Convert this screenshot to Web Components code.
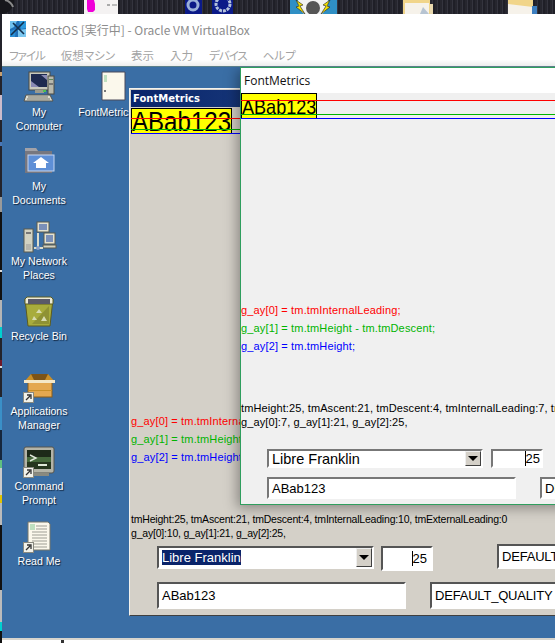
<!DOCTYPE html>
<html lang="ja">
<head>
<meta charset="utf-8">
<title>FontMetrics</title>
<style>
  html, body { margin: 0; height: 100%; overflow: hidden; }
  body {
    background: linear-gradient(#23232b 0 72px, #c9a070 72px 76px, #23232b 76px 95px, #cdbccb 95px 120px,
      #23232b 120px 142px, #4a78b8 142px 146px, #23232b 146px 197px, #9a9a9a 197px 212px, #111 212px 270px,
      #ddd 270px 272px, #111 272px 300px, #b5b5b5 300px 327px, #00d0d0 327px 338px, #23232b 338px 360px,
      #701828 360px 366px, #ddd 366px 368px, #23232b 368px 397px, #3a90c8 397px 430px, #16263c 430px 460px,
      #60c080 460px 468px, #ccc 468px 495px, #e4c400 495px 503px, #bbb 503px 525px, #111 525px 590px,
      #bbb 590px 622px, #00d0d0 622px 631px, #111 631px);
  }
</style>
</head>
<body>
<host-strip></host-strip>
<vbox-frame>
  <desk-icon style="left:1px;top:72px" icon="computer" label="My|Computer"></desk-icon>
  <desk-icon style="left:1px;top:146px" icon="docs" label="My|Documents"></desk-icon>
  <desk-icon style="left:1px;top:221px" icon="net" label="My Network|Places"></desk-icon>
  <desk-icon style="left:1px;top:296px" icon="bin" label="Recycle Bin"></desk-icon>
  <desk-icon style="left:1px;top:371px" icon="box" label="Applications|Manager" shortcut></desk-icon>
  <desk-icon style="left:1px;top:446px" icon="cmd" label="Command|Prompt" shortcut></desk-icon>
  <desk-icon style="left:1px;top:521px" icon="readme" label="Read Me" shortcut></desk-icon>
  <desk-icon style="left:68px;top:72px" icon="blank" label="FontMetrics"></desk-icon>
  <classic-window style="left:129px;top:88px;width:500px;height:528px" caption="FontMetrics">
    <metrics-app leading="10" ay0="10" combo-selected></metrics-app>
  </classic-window>
  <modern-window style="left:240px;top:67px;width:460px;height:438px" caption="FontMetrics">
    <metrics-app compact leading="7" ay0="7"></metrics-app>
  </modern-window>
</vbox-frame>

<script>
// 上端のホストデスクトップ（サムネイル）
class HostStrip extends HTMLElement {
  constructor() {
    super();
    this.attachShadow({ mode: 'open' }).innerHTML = `
      <style>
        :host { display: block; height: 14px; position: relative; overflow: hidden;
                background: repeating-linear-gradient(90deg, #26262e 0 2px, #34343e 2px 3px, #1f1f27 3px 5px); }
        svg { position: absolute; top: 0; display: block; }
      </style>
      <svg style="left:0" width="20" height="14" viewBox="0 0 20 14"><circle cx="1" cy="1" r="13" fill="#17171b"/><path d="M5 0A11 11 0 0 1 13 7" stroke="#8a8a8a" stroke-width="2" fill="none"/></svg>
      <svg style="left:84px" width="35" height="14" viewBox="0 0 35 14"><rect x="0" width="34" height="14" fill="#f4f2f2"/><path d="M3 0h7l1 4v6l-2 2H4l-1-3z" fill="#f000d8"/><rect x="23" y="4" width="3" height="2" fill="#aaa"/><rect x="28" y="4" width="5" height="2" fill="#bbb"/></svg>
      <svg style="left:185px" width="50" height="14" viewBox="0 0 50 14"><rect width="17" height="14" fill="#0b1a88"/><rect x="27" width="21" height="14" fill="#0b1a88"/><circle cx="8" cy="5" r="5" fill="none" stroke="#9ab0d8" stroke-width="3"/><circle cx="38" cy="4" r="7" fill="none" stroke="#b4c2dc" stroke-width="3" stroke-dasharray="3 1"/></svg>
      <svg style="left:290px" width="47" height="14" viewBox="0 0 47 14"><rect width="47" height="14" fill="#2f8fc4"/><circle cx="23" cy="2" r="15" fill="#f2f2f2"/><circle cx="23" cy="8" r="7" fill="#555"/><path d="M6 0l7 5-3 1 5 8-9-7 3-1zM40 0l-7 5 3 1-5 8 9-7-3-1z" fill="#f4e000" stroke="#222" stroke-width=".6"/></svg>
      <svg style="left:403px" width="31" height="14" viewBox="0 0 31 14"><rect width="27" height="14" fill="#f1d58a"/><rect x="2" y="3" width="24" height="11" fill="#f6f2ea"/><path d="M20 7l6 7h-9z" fill="#b7c4d2"/><rect x="27" y="4" width="3" height="10" fill="#e8d8ae"/></svg>
      <svg style="left:508px" width="31" height="14" viewBox="0 0 31 14"><rect width="25" height="14" fill="#f1d58a"/><path d="M0 4l25 3v7H0z" fill="#f6f2ea"/><rect x="24" y="6" width="5" height="8" fill="#3d7fc0"/></svg>
    `;
  }
}
customElements.define('host-strip', HostStrip);

// VirtualBox のウィンドウ枠
class VboxFrame extends HTMLElement {
  constructor() {
    super();
    this.attachShadow({ mode: 'open' }).innerHTML = `
      <style>
        :host { display: block; position: absolute; left: 2px; right: 0; top: 14px; bottom: 0;
                background: #fff; font-family: "Noto Sans CJK JP", "Liberation Sans", sans-serif; }
        .title { height: 30px; display: flex; align-items: center; gap: 5px; padding-left: 8px;
                 font-size: 12px; color: #8d8d8d; letter-spacing: -.02px; }
        .menu { height: 22px; display: flex; align-items: center; gap: 16px; padding-left: 7px;
                font-size: 11.5px; color: #a3a3a3; font-feature-settings: "palt";
                background: linear-gradient(#fff 0 70%, #ececec); }
        .menu .tight { letter-spacing: -1px; }
        .desk { position: absolute; left: 0; right: 0; top: 52px; height: 572px;
                background: #3a6ea5; border-top: 1px solid #5a7f8a; box-sizing: border-box; overflow: hidden; }
        .canvas { position: absolute; left: -2px; top: -67px; width: 800px; height: 800px; }
        .bottom { position: absolute; left: 0; right: 0; top: 624px; height: 5px;
                  background: linear-gradient(#d8d5cd 0 2px, #fff 2px); }
        .bottom i { position: absolute; left: 59px; top: 2px; width: 3px; height: 3px; background: #333; }
        svg { display: block; }
      </style>
      <div class="title">
        <svg width="16" height="16" viewBox="0 0 16 16">
          <rect width="16" height="16" fill="#1f6fb8"/>
          <path d="M0 0h7L4 6 0 8z" fill="#6fc0ee"/><path d="M9 0h7v7l-5 1z" fill="#2d9ade"/>
          <path d="M0 10l6-2-1 8H0z" fill="#2a8fd6"/><path d="M8 9l8-1v8H8z" fill="#7bc7f0"/>
          <path d="M1 14L14 1M3 2l11 11" stroke="#12304f" stroke-width="1.6"/>
        </svg>
        <span>ReactOS [実行中] - Oracle VM VirtualBox</span>
      </div>
      <div class="menu">
        <span class="tight">ファイル</span><span>仮想マシン</span><span>表示</span><span>入力</span><span class="tight">デバイス</span><span>ヘルプ</span>
      </div>
      <div class="desk"><div class="canvas"><slot></slot></div></div>
      <div class="bottom"><i></i></div>
    `;
  }
}
customElements.define('vbox-frame', VboxFrame);

const ICONS = {
  computer: `<rect x="6" y="0" width="21" height="18" fill="#c9c9bd" stroke="#4a4a44"/><rect x="8" y="2" width="16" height="13" fill="#1f2a50"/><path d="M8 9l8 6H8zM18 3l6 5v-5z" fill="#8a8ab4"/><rect x="25" y="4" width="6" height="18" fill="#b9b9ad" stroke="#4a4a44"/><rect x="26" y="7" width="4" height="1" fill="#5d8a5d"/><rect x="26" y="11" width="4" height="2" fill="#777"/><rect x="12" y="18" width="9" height="3" fill="#9a9a8e"/><rect x="20" y="18" width="3" height="2" fill="#50c050"/><path d="M3 23h24l3 6H1z" fill="#dcdcd0" stroke="#55554e"/><path d="M5 25h20M4 27h23" stroke="#77776e"/>`,
  docs: `<path d="M2 2h11l2 3h14v22H2z" fill="#77777f"/><path d="M2 2h11l2 3H2z" fill="#a2a2a8"/><rect x="5" y="9" width="26" height="16" fill="#5e8fd6" stroke="#c6d6f2"/><path d="M18 11l8 6h-3v5H13v-5h-3z" fill="#fff"/>`,
  net: `<rect x="1" y="8" width="9" height="23" fill="#d2d2c2" stroke="#5a5a4e"/><rect x="3" y="11" width="5" height="2" fill="#777"/><path d="M3 24h5M3 26h5M3 28h5" stroke="#999"/><rect x="14" y="1" width="12" height="10" fill="#e4e2d0" stroke="#5a5a4e"/><rect x="16" y="3" width="8" height="6" fill="#7b90b8"/><rect x="21" y="12" width="11" height="11" fill="#e4e2d0" stroke="#5a5a4e"/><rect x="23" y="14" width="7" height="7" fill="#7b90b8"/><rect x="20" y="24" width="13" height="3" fill="#d2d2c2" stroke="#5a5a4e"/><path d="M11 27h9M15 12v15" stroke="#dddccc" stroke-width="2"/><circle cx="15" cy="27" r="2" fill="#8aa0c8"/>`,
  bin: `<path d="M2 3h28l-3 27H5z" fill="#a8ac3c" stroke="#5c5c20"/><path d="M2 3l2-2h24l2 2v5H2z" fill="#ecebd8" stroke="#5c5c20"/><rect x="5" y="3" width="22" height="5" fill="#5a5a68"/><path d="M9 28L26 10v18z" fill="#8f9234"/><path d="M16 13l3 4h-6zM11 20l3 4h-5zM21 20l3 5h-6z" fill="#d8dbb0"/>`,
  box: `<path d="M1 11L8 3h17l7 8-3 1H4z" fill="#c98f28"/><path d="M8 3h17l-3 6H11z" fill="#7c5418"/><rect x="5" y="11" width="24" height="15" fill="#e4a850" stroke="#8a5c18"/><rect x="1" y="9" width="31" height="3" fill="#f4e8c8"/><rect x="5" y="19" width="24" height="1" fill="#c98f28"/>`,
  cmd: `<rect x="1" y="1" width="30" height="26" rx="2" fill="#b4b4a8" stroke="#55554e"/><rect x="4" y="4" width="24" height="19" fill="#1d2a18"/><rect x="4" y="11" width="24" height="5" fill="#45683a"/><rect x="4" y="16" width="24" height="7" fill="#26361e"/><path d="M7 9l6 3-6 3" stroke="#dfe8d8" stroke-width="1.4" fill="none"/><rect x="15" y="18" width="9" height="2" fill="#dfe8d8"/><rect x="8" y="27" width="18" height="3" fill="#8a8a80"/>`,
  readme: `<path d="M5 1h20l2 2v26H5z" fill="#fbf8ec" stroke="#77776a"/><rect x="7" y="3" width="5" height="6" fill="#bfe0bf"/><path d="M13 5h11M13 8h11M9 11h15M9 14h15M9 17h15M9 20h15M9 23h15M9 26h15" stroke="#9d9d94"/>`,
  blank: `<path d="M12 0h23v28H12z" fill="#fbf8ec" stroke="#4a4a5a"/><rect x="14" y="3" width="3" height="7" fill="#bfe0bf"/><rect x="14" y="18" width="2" height="2" fill="#777"/>`
};

// デスクトップのアイコン
class DeskIcon extends HTMLElement {
  constructor() {
    super();
    this.attachShadow({ mode: 'open' });
  }

  connectedCallback() {
    const lines = this.getAttribute('label').split('|').map(t => `<div>${t}</div>`).join('');
    const arrow = this.hasAttribute('shortcut') ? `
      <svg class="arrow" width="11" height="11" viewBox="0 0 11 11">
        <rect x=".5" y=".5" width="10" height="10" fill="#f2f2ea" stroke="#8a8a80"/>
        <path d="M3 8l4-4M4 3h4v4" stroke="#333" stroke-width="1.3" fill="none"/>
      </svg>` : '';
    this.shadowRoot.innerHTML = `
      <style>
        :host { position: absolute; display: flex; flex-direction: column; align-items: center;
                width: 76px; font: 10.6px/14px "Liberation Sans", sans-serif; color: #fff; }
        .pic { position: relative; width: 32px; height: 32px; margin-bottom: 1px; }
        .arrow { position: absolute; left: 0; bottom: 0; }
        .text { text-align: center; white-space: nowrap; text-shadow: 1px 1px 1px #10233c; }
        svg { display: block; overflow: visible; }
      </style>
      <div class="pic"><svg width="32" height="32" viewBox="0 0 32 32">${ICONS[this.getAttribute('icon')]}</svg>${arrow}</div>
      <div class="text">${lines}</div>
    `;
  }
}
customElements.define('desk-icon', DeskIcon);

// ReactOS 側のクラシックウィンドウ
class ClassicWindow extends HTMLElement {
  constructor() {
    super();
    this.attachShadow({ mode: 'open' });
  }

  connectedCallback() {
    this.shadowRoot.innerHTML = `
      <style>
        :host { position: absolute; display: flex; flex-direction: column; box-sizing: border-box;
                padding: 1px 2px 2px 1px; background: #d4d0c8;
                border: 1px solid; border-color: #f4f2ec #404040 #404040 #f4f2ec; }
        .bar { height: 17px; flex: none; display: flex; align-items: center; padding-left: 2px; margin-bottom: 1px;
               font: bold 10px "DejaVu Sans", sans-serif; color: #fff;
               background: linear-gradient(90deg, #0a246a, #3a6ea5); }
      </style>
      <div class="bar">${this.getAttribute('caption')}</div>
      <slot></slot>
    `;
  }
}
customElements.define('classic-window', ClassicWindow);

// 手前の Windows 10 ウィンドウ
class ModernWindow extends HTMLElement {
  constructor() {
    super();
    this.attachShadow({ mode: 'open' });
  }

  connectedCallback() {
    this.shadowRoot.innerHTML = `
      <style>
        :host { position: absolute; display: flex; flex-direction: column; box-sizing: border-box;
                border: 1px solid #2f9e5e; background: #f0f0f0;
                box-shadow: -3px 3px 12px rgba(0,0,0,.35); }
        .bar { height: 25px; flex: none; display: flex; align-items: center; padding-left: 3px;
               background: #fff; color: #111; font: 12px "Open Sans", "Liberation Sans", sans-serif; }
      </style>
      <div class="bar">${this.getAttribute('caption')}</div>
      <slot></slot>
    `;
  }
}
customElements.define('modern-window', ModernWindow);

// FontMetrics アプリ本体
class MetricsApp extends HTMLElement {
  constructor() {
    super();
    this.attachShadow({ mode: 'open' });
  }

  connectedCallback() {
    const leading = this.getAttribute('leading');
    const ay0 = this.getAttribute('ay0');
    const selected = this.hasAttribute('combo-selected');
    this.shadowRoot.innerHTML = `
      <style>
        :host { display: block; position: relative; flex: 1;
                font: 11px "Liberation Sans", sans-serif; color: #000;
                --gap-code: 278px; --gap-ctl: 6px; --row1: 23px; --row2: 27px; --gap-rows: 13px;
                --sample: 28px; --sample-lh: 25px; --sample-w: 99px; --red: 10px; --green: 21px; --blue: 25px;
                --combo-font: 13px; --combo-w: 217px; --row-gap: 7px;
                --status-font: 10.5px; --status-sp: -.2px;
                --spin-pad: 4px; --spin-h: 25px; --shade: #555; }
        :host([compact]) { --gap-code: 182px; --gap-ctl: 20px; --row1: 19px; --row2: 22px; --gap-rows: 9px;
                --sample: 21px; --sample-lh: 26px; --sample-w: 74px; --red: 7px; --green: 21px; --blue: 25px;
                --combo-font: 14.5px; --combo-w: 216px; --row-gap: 8px;
                --status-font: 11px; --status-sp: .1px;
                --spin-pad: 1px; --spin-h: 19px; --shade: #777; }
        .sample { box-sizing: border-box; width: calc(var(--sample-w) + 2px); height: 26px; border: 1px solid #000;
                  background: #ff0; overflow: hidden; white-space: nowrap; }
        .sample span { display: inline-block; font-size: var(--sample); line-height: var(--sample-lh);
                       transform: scaleX(.86); transform-origin: 0 0; }
        .line { position: absolute; left: 0; right: 0; height: 1px; }
        .code { margin-top: var(--gap-code); line-height: 18px; letter-spacing: .15px; }
        .r { color: #f00; } .g { color: #00b400; } .b { color: #00f; }
        .status { margin-top: 47px; line-height: 13.5px; white-space: nowrap;
                  font-size: var(--status-font); letter-spacing: var(--status-sp); }
        .row { display: flex; padding-left: 26px; }
        .row1 { margin-top: var(--gap-ctl); height: var(--row1); gap: var(--row-gap); }
        .row2 { margin-top: var(--gap-rows); height: var(--row2); gap: 24px; }
        .sunken { box-sizing: border-box; background: #fff; display: flex; align-items: center;
                  border: 2px solid; border-color: var(--shade) #fff #fff var(--shade); font-size: 13px;
                  white-space: nowrap; overflow: hidden; padding-left: 3px; flex: none; }
        .combo { width: var(--combo-w); font-size: var(--combo-font); }
        .combo b { font-weight: normal; }
        .combo b.sel { background: #0a246a; color: #fff; }
        .drop { margin-left: auto; width: 16px; align-self: stretch; box-sizing: border-box; background: #d4d0c8;
                border: 1px solid; border-color: #eee #404040 #404040 #eee; display: flex; align-items: center;
                justify-content: center; }
        .drop i { border: 5px solid transparent; border-top: 5px solid #000; border-bottom: 0; }
        .spin { width: 52px; height: var(--spin-h); justify-content: flex-end; padding-right: var(--spin-pad); }
        .spin i { width: 1px; height: 15px; background: #000; margin-right: 0; }
        .edit { width: 249px; }
        .qual { width: 128px; letter-spacing: -.2px; }
        .far { margin-left: 57px; margin-top: -2px; width: 128px; letter-spacing: -.2px; }
      </style>
      <div class="sample"><span>ABab123</span></div>
      <div class="line" style="top:var(--red);background:#f00"></div>
      <div class="line" style="top:var(--green);background:#00b400"></div>
      <div class="line" style="top:var(--blue);background:#00f"></div>
      <div class="code">
        <div class="r">g_ay[0] = tm.tmInternalLeading;</div>
        <div class="g">g_ay[1] = tm.tmHeight - tm.tmDescent;</div>
        <div class="b">g_ay[2] = tm.tmHeight;</div>
      </div>
      <div class="status">
        <div>tmHeight:25, tmAscent:21, tmDescent:4, tmInternalLeading:${leading}, tmExternalLeading:0</div>
        <div>g_ay[0]:${ay0}, g_ay[1]:21, g_ay[2]:25,</div>
      </div>
      <div class="row row1">
        <div class="sunken combo"><b class="${selected ? 'sel' : ''}">Libre Franklin</b><div class="drop"><i></i></div></div>
        <div class="sunken spin"><i></i>25</div>
        <div class="sunken far">DEFAULT_CHARSET</div>
      </div>
      <div class="row row2">
        <div class="sunken edit">ABab123</div>
        <div class="sunken qual">DEFAULT_QUALITY</div>
      </div>
    `;
  }
}
customElements.define('metrics-app', MetricsApp);
</script>
</body>
</html>
